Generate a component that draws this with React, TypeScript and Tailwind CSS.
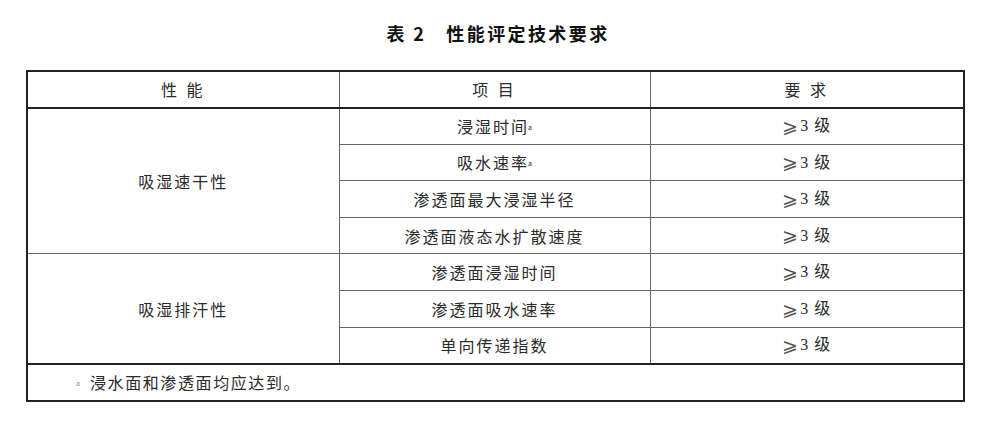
const rowsA = [
  { item: "浸湿时间", note: true },
  { item: "吸水速率", note: true },
  { item: "渗透面最大浸湿半径", note: false },
  { item: "渗透面液态水扩散速度", note: false },
];

const rowsB = [
  { item: "渗透面浸湿时间", note: false },
  { item: "渗透面吸水速率", note: false },
  { item: "单向传递指数", note: false },
];

const serif = "font-['Liberation_Serif','DejaVu_Serif','Noto_Sans_CJK_SC',serif]";

function Req() {
  return (
    <span className={`${serif} tracking-[1px] inline-flex items-center`}>
      <span className="font-['DejaVu_Serif',serif] text-[19px] leading-none text-[#555] mr-[1px]">⩾</span>
      3 级
    </span>
  );
}

function Item({ item, note }: { item: string; note: boolean }) {
  return (
    <span className="tracking-[2px]">
      {item}
      {note && <sup className="text-[7px] tracking-normal -ml-[1px]">a</sup>}
    </span>
  );
}

export default function App() {
  const cell = "border border-[#666] text-center align-middle p-0";
  return (
    <div className="w-[1000px] h-[422px] bg-white text-[#2b2b2b] font-['Noto_Sans_CJK_SC',sans-serif]">
      <div className="h-[70px] flex items-center justify-center pb-[4px]">
        <h1 className="text-[18px] font-bold text-[#111] tracking-[2.4px] pr-[4px]">
          表 2<span className="inline-block w-[20px]" />性能评定技术要求
        </h1>
      </div>
      <div className="px-[26px]">
        <table className="w-[937px] table-fixed border-collapse border-2 border-[#222] text-[16px]">
          <colgroup>
            <col className="w-[312px]" />
            <col className="w-[311px]" />
            <col className="w-[314px]" />
          </colgroup>
          <thead>
            <tr className="h-[36.5px] border-b-2 border-[#222]">
              <th className={`${cell} font-normal tracking-[3px]`}>性 能</th>
              <th className={`${cell} font-normal tracking-[3px]`}>项 目</th>
              <th className={`${cell} font-normal tracking-[3px]`}>要 求</th>
            </tr>
          </thead>
          <tbody className="border-b-2 border-[#222]">
            {rowsA.map((r, i) => (
              <tr key={r.item} className="h-[36.6px]">
                {i === 0 && (
                  <td rowSpan={4} className={`${cell} tracking-[2px]`}>
                    吸湿速干性
                  </td>
                )}
                <td className={cell}>
                  <Item item={r.item} note={r.note} />
                </td>
                <td className={cell}>
                  <Req />
                </td>
              </tr>
            ))}
            {rowsB.map((r, i) => (
              <tr key={r.item} className="h-[36.6px]">
                {i === 0 && (
                  <td rowSpan={3} className={`${cell} tracking-[2px]`}>
                    吸湿排汗性
                  </td>
                )}
                <td className={cell}>
                  <Item item={r.item} note={r.note} />
                </td>
                <td className={cell}>
                  <Req />
                </td>
              </tr>
            ))}
          </tbody>
          <tfoot>
            <tr className="h-[37px]">
              <td colSpan={3} className="p-0 pl-[48px] text-left align-middle">
                <sup className="text-[7px] text-[#888] mr-[10px]">a</sup>
                <span className="tracking-[1.6px]">浸水面和渗透面均应达到。</span>
              </td>
            </tr>
          </tfoot>
        </table>
      </div>
    </div>
  );
}
